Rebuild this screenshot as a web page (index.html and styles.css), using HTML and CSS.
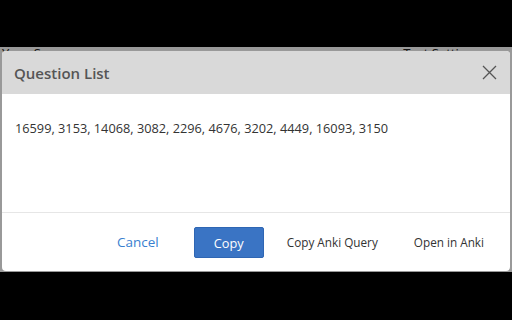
FILE: index.html
```html
<!DOCTYPE html>
<html>
<head>
<meta charset="utf-8">
<link rel="stylesheet" href="styles.css">
</head>
<body>
<div class="screen">
  <div class="page">
    <div class="page-head">
      <span class="page-title">Your Score</span>
      <span class="page-link">Test Settings</span>
    </div>
  </div>
  <div class="overlay"></div>
  <div class="modal">
    <div class="modal-header">
      <h2 class="modal-title">Question List</h2>
      <button class="close" aria-label="Close">
        <svg width="15" height="15" viewBox="0 0 15 15"><path d="M1 1L14 14M14 1L1 14" stroke="#555" stroke-width="1.3" fill="none"/></svg>
      </button>
    </div>
    <div class="modal-body">16599, 3153, 14068, 3082, 2296, 4676, 3202, 4449, 16093, 3150</div>
    <div class="modal-footer">
      <button class="btn btn-link">Cancel</button>
      <button class="btn btn-primary">Copy</button>
      <button class="btn btn-plain">Copy Anki Query</button>
      <button class="btn btn-plain">Open in Anki</button>
    </div>
  </div>
</div>
</body>
</html>
```
FILE: styles.css
```css
html, body {
  margin: 0;
  padding: 0;
  background: #000;
  font-family: "Open Sans", "Noto Sans", sans-serif;
}
.screen {
  position: relative;
  margin-top: 47px;
  height: 225px;
  background: #fff;
  overflow: hidden;
}
.page-head {
  display: flex;
  justify-content: space-between;
  padding: 0 32px 0 2px;
  font-size: 13px;
  color: #222;
  line-height: 18px;
  margin-top: -3px;
}
.overlay {
  position: absolute;
  inset: 0;
  background: rgba(0,0,0,0.4);
}
.modal {
  position: absolute;
  left: 2px;
  right: 2px;
  top: 4px;
  bottom: 1px;
  background: #fff;
  border-radius: 4px;
  overflow: hidden;
  display: flex;
  flex-direction: column;
}
.modal-header {
  height: 43px;
  background: #d9d9d9;
  display: flex;
  align-items: center;
  justify-content: space-between;
  padding: 0 13px 0 12px;
}
.modal-title {
  margin: 0;
  font-size: 15px;
  font-weight: 600;
  color: #555;
}
.close {
  border: 0;
  background: none;
  padding: 0;
  width: 15px;
  height: 15px;
  display: block;
}
.close svg { display: block; }
.modal-body {
  height: 119px;
  box-sizing: border-box;
  padding: 25px 13px 0;
  font-size: 12.75px;
  color: #333;
  line-height: 18px;
  border-bottom: 1px solid #e6e6e6;
}
.modal-footer {
  flex: 1;
  display: flex;
  align-items: center;
  justify-content: flex-end;
  padding: 0 26px 0 0;
}
.btn {
  font-family: "Open Sans", "Noto Sans", sans-serif;
  font-size: 11.75px;
  border: 0;
  background: none;
  padding: 0;
  cursor: pointer;
}
.btn-link {
  color: #3a7fd0;
  font-size: 13.5px;
  margin-right: 35px;
}
.btn-primary {
  width: 70px;
  height: 31px;
  background: #3a74c4;
  color: #fff;
  font-size: 12.75px;
  border: 1px solid #2f66b3;
  border-radius: 2px;
  margin-right: 23px;
  padding-top: 2px;
}
.btn-plain {
  color: #333;
}
.btn-plain + .btn-plain {
  margin-left: 36px;
}
```
